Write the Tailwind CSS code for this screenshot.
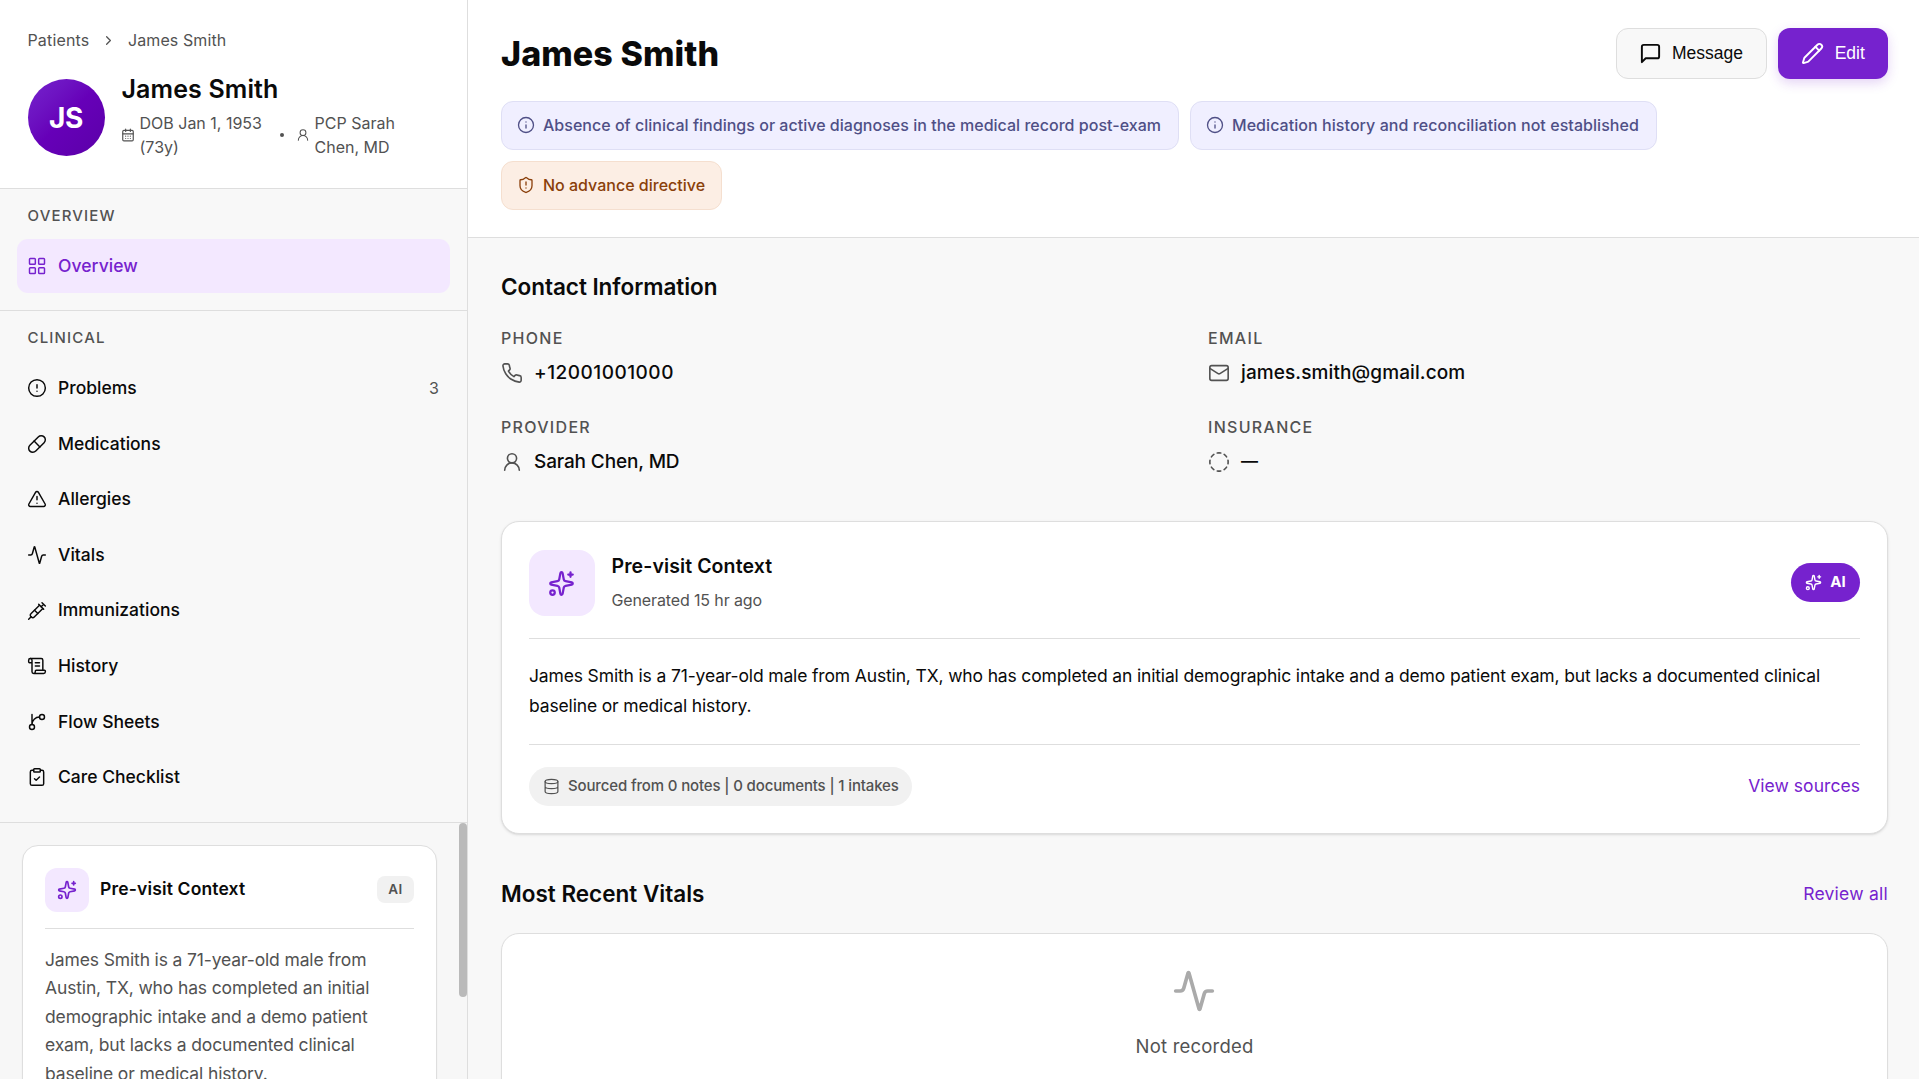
<!DOCTYPE html>
<html lang="en">
    <head>
        <meta charset="UTF-8" />
        <meta name="viewport" content="width=device-width, initial-scale=1.0" />
        <title>James Smith - Overview</title>
        <script src="https://cdn.jsdelivr.net/npm/@tailwindcss/browser@4"></script>
    </head>
    <body
        class="flex h-screen overflow-hidden bg-[#f8f8f8] font-['Inter','Liberation_Sans',sans-serif] text-[#0a0a0a]"
    >
        <!-- icon sprite -->
        <svg class="hidden">
            <symbol id="chevron" viewBox="0 0 24 24"><path d="m9 18 6-6-6-6" /></symbol>
            <symbol id="calendar" viewBox="0 0 24 24">
                <path d="M8 2v4M16 2v4M3 10h18" />
                <rect width="18" height="18" x="3" y="4" rx="2" />
                <path d="M8 14h.01M12 14h.01M16 14h.01M8 18h.01M12 18h.01M16 18h.01" />
            </symbol>
            <symbol id="user" viewBox="0 0 24 24">
                <circle cx="12" cy="8" r="5" />
                <path d="M20 21a8 8 0 0 0-16 0" />
            </symbol>
            <symbol id="grid" viewBox="0 0 24 24">
                <rect width="7" height="7" x="3" y="3" rx="1" />
                <rect width="7" height="7" x="14" y="3" rx="1" />
                <rect width="7" height="7" x="14" y="14" rx="1" />
                <rect width="7" height="7" x="3" y="14" rx="1" />
            </symbol>
            <symbol id="alert" viewBox="0 0 24 24">
                <circle cx="12" cy="12" r="10" />
                <path d="M12 8v4M12 16h.01" />
            </symbol>
            <symbol id="pill" viewBox="0 0 24 24">
                <path d="m10.5 20.5 10-10a4.95 4.95 0 1 0-7-7l-10 10a4.95 4.95 0 1 0 7 7Z" />
                <path d="m8.5 8.5 7 7" />
            </symbol>
            <symbol id="triangle" viewBox="0 0 24 24">
                <path d="m21.73 18-8-14a2 2 0 0 0-3.48 0l-8 14A2 2 0 0 0 4 21h16a2 2 0 0 0 1.73-3" />
                <path d="M12 9v4M12 17h.01" />
            </symbol>
            <symbol id="activity" viewBox="0 0 24 24">
                <path
                    d="M22 12h-2.48a2 2 0 0 0-1.93 1.46l-2.35 8.36a.25.25 0 0 1-.48 0L9.24 2.18a.25.25 0 0 0-.48 0l-2.35 8.36A2 2 0 0 1 4.49 12H2"
                />
            </symbol>
            <symbol id="syringe" viewBox="0 0 24 24">
                <path d="m18 2 4 4M17 7l3-3" />
                <path d="M19 9 8.7 19.3c-1 1-2.5 1-3.4 0l-.6-.6c-1-1-1-2.5 0-3.4L15 5" />
                <path d="m9 11 4 4M5 19l-3 3M14 4l6 6" />
            </symbol>
            <symbol id="scroll" viewBox="0 0 24 24">
                <path d="M15 12h-5M15 8h-5M19 17V5a2 2 0 0 0-2-2H4" />
                <path
                    d="M8 21h12a2 2 0 0 0 2-2v-1a1 1 0 0 0-1-1H11a1 1 0 0 0-1 1v1a2 2 0 1 1-4 0V5a2 2 0 1 0-4 0v2a1 1 0 0 0 1 1h3"
                />
            </symbol>
            <symbol id="branch" viewBox="0 0 24 24">
                <path d="M15 6a9 9 0 0 0-9 9V3" />
                <circle cx="18" cy="6" r="3" />
                <circle cx="6" cy="18" r="3" />
            </symbol>
            <symbol id="clipboard" viewBox="0 0 24 24">
                <rect width="8" height="4" x="8" y="2" rx="1" />
                <path d="M16 4h2a2 2 0 0 1 2 2v14a2 2 0 0 1-2 2H6a2 2 0 0 1-2-2V6a2 2 0 0 1 2-2h2" />
                <path d="m9 14 2 2 4-4" />
            </symbol>
            <symbol id="sparkles" viewBox="0 0 24 24">
                <path
                    d="M11.017 2.814a1 1 0 0 1 1.966 0l1.051 5.558a2 2 0 0 0 1.594 1.594l5.558 1.051a1 1 0 0 1 0 1.966l-5.558 1.051a2 2 0 0 0-1.594 1.594l-1.051 5.558a1 1 0 0 1-1.966 0l-1.051-5.558a2 2 0 0 0-1.594-1.594l-5.558-1.051a1 1 0 0 1 0-1.966l5.558-1.051a2 2 0 0 0 1.594-1.594z"
                />
                <path d="M20 2v4M22 4h-4" />
                <circle cx="4" cy="20" r="2" />
            </symbol>
            <symbol id="message" viewBox="0 0 24 24">
                <path d="M21 15a2 2 0 0 1-2 2H7l-4 4V5a2 2 0 0 1 2-2h14a2 2 0 0 1 2 2z" />
            </symbol>
            <symbol id="pencil" viewBox="0 0 24 24">
                <path
                    d="M21.174 6.812a1 1 0 0 0-3.986-3.987L3.842 16.174a2 2 0 0 0-.5.83l-1.321 4.352a.5.5 0 0 0 .623.622l4.353-1.32a2 2 0 0 0 .83-.497z"
                />
                <path d="m15 5 4 4" />
            </symbol>
            <symbol id="info" viewBox="0 0 24 24">
                <circle cx="12" cy="12" r="10" />
                <path d="M12 16v-4M12 8h.01" />
            </symbol>
            <symbol id="shield" viewBox="0 0 24 24">
                <path
                    d="M20 13c0 5-3.5 7.5-7.66 8.95a1 1 0 0 1-.67-.01C7.5 20.5 4 18 4 13V6a1 1 0 0 1 1-1c2 0 4.5-1.2 6.24-2.72a1.17 1.17 0 0 1 1.52 0C14.51 3.81 17 5 19 5a1 1 0 0 1 1 1z"
                />
                <path d="M12 8v4M12 16h.01" />
            </symbol>
            <symbol id="phone" viewBox="0 0 24 24">
                <path
                    d="M22 16.92v3a2 2 0 0 1-2.18 2 19.79 19.79 0 0 1-8.63-3.07 19.5 19.5 0 0 1-6-6 19.79 19.79 0 0 1-3.07-8.67A2 2 0 0 1 4.11 2h3a2 2 0 0 1 2 1.72 12.84 12.84 0 0 0 .7 2.81 2 2 0 0 1-.45 2.11L8.09 9.91a16 16 0 0 0 6 6l1.27-1.27a2 2 0 0 1 2.11-.45 12.84 12.84 0 0 0 2.81.7A2 2 0 0 1 22 16.92z"
                />
            </symbol>
            <symbol id="mail" viewBox="0 0 24 24">
                <rect width="20" height="16" x="2" y="4" rx="2" />
                <path d="m22 7-8.991 5.727a2 2 0 0 1-2.009 0L2 7" />
            </symbol>
            <symbol id="dashed" viewBox="0 0 24 24">
                <path d="M10.1 2.182a10 10 0 0 1 3.8 0M13.9 21.818a10 10 0 0 1-3.8 0" />
                <path d="M17.609 3.721a10 10 0 0 1 2.69 2.7M2.182 13.9a10 10 0 0 1 0-3.8" />
                <path d="M20.279 17.609a10 10 0 0 1-2.7 2.69M21.818 10.1a10 10 0 0 1 0 3.8" />
                <path d="M3.721 6.391a10 10 0 0 1 2.7-2.69M6.391 20.279a10 10 0 0 1-2.69-2.7" />
            </symbol>
            <symbol id="database" viewBox="0 0 24 24">
                <ellipse cx="12" cy="5" rx="9" ry="3" />
                <path d="M3 5v14a9 3 0 0 0 18 0V5M3 12a9 3 0 0 0 18 0" />
            </symbol>
        </svg>

        <!-- sidebar -->
        <aside
            class="flex h-full w-[468px] shrink-0 flex-col border-r border-[#dedede] fill-none [stroke-linecap:round] [stroke-linejoin:round]"
        >
            <div class="h-[189px] shrink-0 border-b border-[#dedede] bg-white px-[27.5px] pt-7">
                <nav class="flex h-6 items-center text-base text-[#525252]">
                    <span class="w-[73px] tracking-[0.15px]">Patients</span>
                    <svg class="size-[15px] stroke-current stroke-2"><use href="#chevron" /></svg>
                    <span class="ml-[12.5px] tracking-[0.1px]">James Smith</span>
                </nav>
                <div class="mt-5 flex items-start gap-4">
                    <div
                        class="mt-[7px] flex size-[77px] shrink-0 items-center justify-center rounded-full bg-linear-135 from-[#7622ce] via-[#6600b8] to-[#5b00a8] text-[28px] font-bold tracking-[-0.4px] text-white"
                    >
                        JS
                    </div>
                    <div>
                        <h2 class="pl-px text-[25px] leading-[35px] font-semibold tracking-[0.12px]">James Smith</h2>
                        <div class="mt-1 flex items-center text-base leading-6 text-[#525252]">
                            <svg class="size-[14px] shrink-0 stroke-current stroke-2"><use href="#calendar" /></svg>
                            <span class="ml-[5px] w-[140px]">DOB Jan 1, 1953<br />(73y)</span>
                            <span class="size-1 rounded-full bg-[#525252]"></span>
                            <svg class="ml-3 size-[14px] shrink-0 stroke-current stroke-[1.75]"><use href="#user" /></svg>
                            <span class="ml-[5px]">PCP Sarah<br />Chen, MD</span>
                        </div>
                    </div>
                </div>
            </div>

            <div class="h-[122px] shrink-0 border-b border-[#dedede] px-[17px] pt-[15px]">
                <h3 class="px-[10.5px] text-[15px] leading-6 font-medium tracking-[1.17px] text-[#525252]">OVERVIEW</h3>
                <a
                    class="mt-[11px] flex h-[54px] items-center gap-[11px] rounded-[11px] bg-[#f3e8ff] px-[10px] pt-px text-[17.5px] font-medium tracking-[0.05px] text-[#7622ce]"
                >
                    <svg class="mb-px size-5 stroke-current stroke-[1.75]"><use href="#grid" /></svg>Overview
                </a>
            </div>

            <div class="h-[512px] shrink-0 border-b border-[#dedede] px-[17px] pt-[15px]">
                <h3 class="px-[10.5px] text-[15px] leading-6 font-medium tracking-[1.17px] text-[#525252]">CLINICAL</h3>
                <ul
                    class="mt-[11px] flex flex-col gap-[1.65px] text-[17.5px] font-medium [&_li]:flex [&_li]:h-[54px] [&_li]:items-center [&_li]:gap-[11px] [&_li]:px-[10px] [&_svg]:size-5 [&_svg]:stroke-current [&_svg]:stroke-[1.75]"
                >
                    <li>
                        <svg><use href="#alert" /></svg>Problems
                        <span class="mr-px ml-auto text-base font-normal text-[#525252]">3</span>
                    </li>
                    <li><svg><use href="#pill" /></svg>Medications</li>
                    <li><svg><use href="#triangle" /></svg>Allergies</li>
                    <li><svg><use href="#activity" /></svg>Vitals</li>
                    <li><svg><use href="#syringe" /></svg>Immunizations</li>
                    <li><svg><use href="#scroll" /></svg>History</li>
                    <li><svg><use href="#branch" /></svg>Flow Sheets</li>
                    <li><svg><use href="#clipboard" /></svg>Care Checklist</li>
                </ul>
            </div>

            <div class="flex min-h-0 flex-1 items-start justify-between overflow-hidden bg-[#f7f7f7] pl-[22px]">
                <div class="mt-[22px] h-[400px] w-[415px] rounded-2xl border border-[#dedede] bg-white px-[22px] pt-[22px] shadow-xs">
                    <div class="flex items-center">
                        <div class="flex size-11 items-center justify-center rounded-xl bg-[#f3e8ff] text-[#7622ce]">
                            <svg class="size-5 stroke-current stroke-2"><use href="#sparkles" /></svg>
                        </div>
                        <h3 class="ml-[11px] pb-0.5 text-[17.5px] font-semibold tracking-[0.16px]">Pre-visit Context</h3>
                        <span
                            class="mb-px ml-auto flex h-[27px] w-[37px] items-center justify-center rounded-lg bg-[#f1f1f1] text-[13.5px] font-semibold tracking-[0.4px] text-[#525252]"
                            >AI</span
                        >
                    </div>
                    <p
                        class="mt-4 border-t border-[#dedede] pt-[17px] text-[17.5px] leading-[28.4px] tracking-[-0.14px] whitespace-nowrap text-[#525252]"
                    >
                        James Smith is a 71-year-old male from<br />
                        Austin, TX, who has completed an initial<br />
                        demographic intake and a demo patient<br />
                        exam, but lacks a documented clinical<br />
                        baseline or medical history.
                    </p>
                </div>
                <!-- scrollbar thumb -->
                <div class="h-[174px] w-2 rounded-full bg-[#bababa]"></div>
            </div>
        </aside>

        <!-- main column -->
        <main class="flex min-w-0 flex-1 flex-col fill-none [stroke-linecap:round] [stroke-linejoin:round]">
            <header class="h-[238px] shrink-0 border-b border-[#dedede] bg-white pt-7 pr-[31px] pl-[33px]">
                <div class="flex h-[51px] items-center justify-between">
                    <h1 class="text-[34px] font-extrabold tracking-[0.08px]">James Smith</h1>
                    <div class="flex gap-[11px] font-['Liberation_Sans',sans-serif] text-[17.5px]">
                        <button
                            class="flex h-[51px] w-[151px] items-center justify-center gap-[10px] rounded-xl border border-[#dedede] bg-[#f8f8f8] pr-px"
                        >
                            <svg class="size-[23px] stroke-current stroke-2"><use href="#message" /></svg>Message
                        </button>
                        <button
                            class="flex h-[51px] w-[110px] items-center justify-center gap-[10.5px] rounded-xl bg-[#7622ce] text-white shadow-[0_4px_12px_rgba(118,34,206,0.2)]"
                        >
                            <svg class="size-[23px] stroke-current stroke-2"><use href="#pencil" /></svg>Edit
                        </button>
                    </div>
                </div>
                <div
                    class="mt-[22px] flex flex-wrap gap-[11px] text-base font-medium [&>span]:flex [&>span]:h-[49px] [&>span]:items-center [&>span]:gap-2 [&>span]:rounded-xl [&>span]:border [&>span]:pb-px [&>span]:pl-[15px] [&_svg]:size-[18px] [&_svg]:stroke-current [&_svg]:stroke-[1.75]"
                >
                    <span class="w-[678px] border-[#dfdff5] bg-[#f0efff] tracking-[0.02px] text-[#4f4f86]">
                        <svg><use href="#info" /></svg>
                        Absence of clinical findings or active diagnoses in the medical record post-exam
                    </span>
                    <span class="w-[467px] border-[#dfdff5] bg-[#f0efff] tracking-[0.06px] text-[#4f4f86]">
                        <svg><use href="#info" /></svg>
                        Medication history and reconciliation not established
                    </span>
                    <span class="w-[221px] border-[#f5dfcf] bg-[#fceee4] text-[#8a3f0a]">
                        <svg><use href="#shield" /></svg>
                        No advance directive
                    </span>
                </div>
            </header>

            <div class="min-h-0 flex-1 overflow-hidden pt-[33px] pr-[31px] pl-[33px]">
                <h2 class="text-[22.5px] leading-8 font-semibold tracking-[-0.04px]">Contact Information</h2>
                <dl
                    class="mt-[23px] grid grid-cols-2 gap-x-[27px] gap-y-[29px] [&_dd]:mt-2 [&_dd]:flex [&_dd]:h-[26px] [&_dd]:items-center [&_dd]:gap-[11px] [&_dd]:text-[19px] [&_dd]:font-medium [&_dt]:h-[26px] [&_dt]:text-base [&_dt]:leading-6 [&_dt]:font-medium [&_dt]:tracking-[1.3px] [&_dt]:text-[#525252] [&_svg]:size-[22px] [&_svg]:stroke-[#525252] [&_svg]:stroke-[1.75]"
                >
                    <div>
                        <dt>PHONE</dt>
                        <dd class="tracking-[0.5px]"><svg><use href="#phone" /></svg>+12001001000</dd>
                    </div>
                    <div>
                        <dt>EMAIL</dt>
                        <dd class="tracking-[0.1px]"><svg><use href="#mail" /></svg>james.smith@gmail.com</dd>
                    </div>
                    <div>
                        <dt>PROVIDER</dt>
                        <dd class="tracking-[-0.13px]"><svg><use href="#user" /></svg>Sarah Chen, MD</dd>
                    </div>
                    <div>
                        <dt>INSURANCE</dt>
                        <dd><svg><use href="#dashed" /></svg><span class="text-[17px] font-semibold">—</span></dd>
                    </div>
                </dl>

                <section class="mt-[46px] h-[313px] rounded-[18px] border border-[#dedede] bg-white px-[27px] pt-7 shadow-sm">
                    <div class="flex items-center border-b border-[#dedede] pb-[22px]">
                        <div class="flex size-[66px] items-center justify-center rounded-2xl bg-[#f3e8ff] text-[#7622ce]">
                            <svg class="mr-px size-[27px] stroke-current stroke-2"><use href="#sparkles" /></svg>
                        </div>
                        <div class="ml-[16.5px]">
                            <h3 class="text-[19.5px] leading-8 font-semibold tracking-[0.1px]">Pre-visit Context</h3>
                            <p class="mt-0.5 text-base leading-8 tracking-[-0.13px] text-[#525252]">Generated 15 hr ago</p>
                        </div>
                        <span
                            class="mb-[2px] ml-auto flex h-[39px] w-[69px] items-center justify-center gap-2 rounded-full bg-[#7622ce] text-[15px] font-bold text-white"
                        >
                            <svg class="size-[17px] stroke-current stroke-2"><use href="#sparkles" /></svg>AI
                        </span>
                    </div>
                    <p
                        class="h-[106px] border-b border-[#dedede] pt-[22px] text-[17.5px] leading-[30px] tracking-[-0.148px] whitespace-nowrap"
                    >
                        James Smith is a 71-year-old male from Austin, TX, who has completed an initial demographic intake
                        and a demo patient exam, but lacks a documented clinical<br />
                        baseline or medical history.
                    </p>
                    <div class="mt-[22px] flex items-center justify-between">
                        <span
                            class="flex h-[39px] w-[383px] items-center gap-2 rounded-full bg-[#f1f1f1] pl-[14px] text-[15px] font-medium tracking-[-0.14px] text-[#525252]"
                        >
                            <svg class="size-[17px] stroke-current stroke-[1.75]"><use href="#database" /></svg>
                            Sourced from 0 notes | 0 documents | 1 intakes
                        </span>
                        <a class="text-[17.5px] tracking-[0.05px] text-[#7622ce]">View sources</a>
                    </div>
                </section>

                <div class="mt-[44px] flex items-center justify-between">
                    <h2 class="text-[22.5px] leading-8 font-semibold">Most Recent Vitals</h2>
                    <a class="text-[17.5px] tracking-[0.25px] text-[#7622ce]">Review all</a>
                </div>
                <section
                    class="mt-[23px] flex h-[300px] flex-col items-center rounded-[18px] border border-[#dedede] bg-white pt-[35px] shadow-xs"
                >
                    <svg class="mr-px size-11 stroke-[#aaa] stroke-2"><use href="#activity" /></svg>
                    <p class="mt-[19px] text-[18.5px] leading-7 tracking-[0.2px] text-[#525252]">Not recorded</p>
                </section>
            </div>
        </main>
    </body>
</html>
